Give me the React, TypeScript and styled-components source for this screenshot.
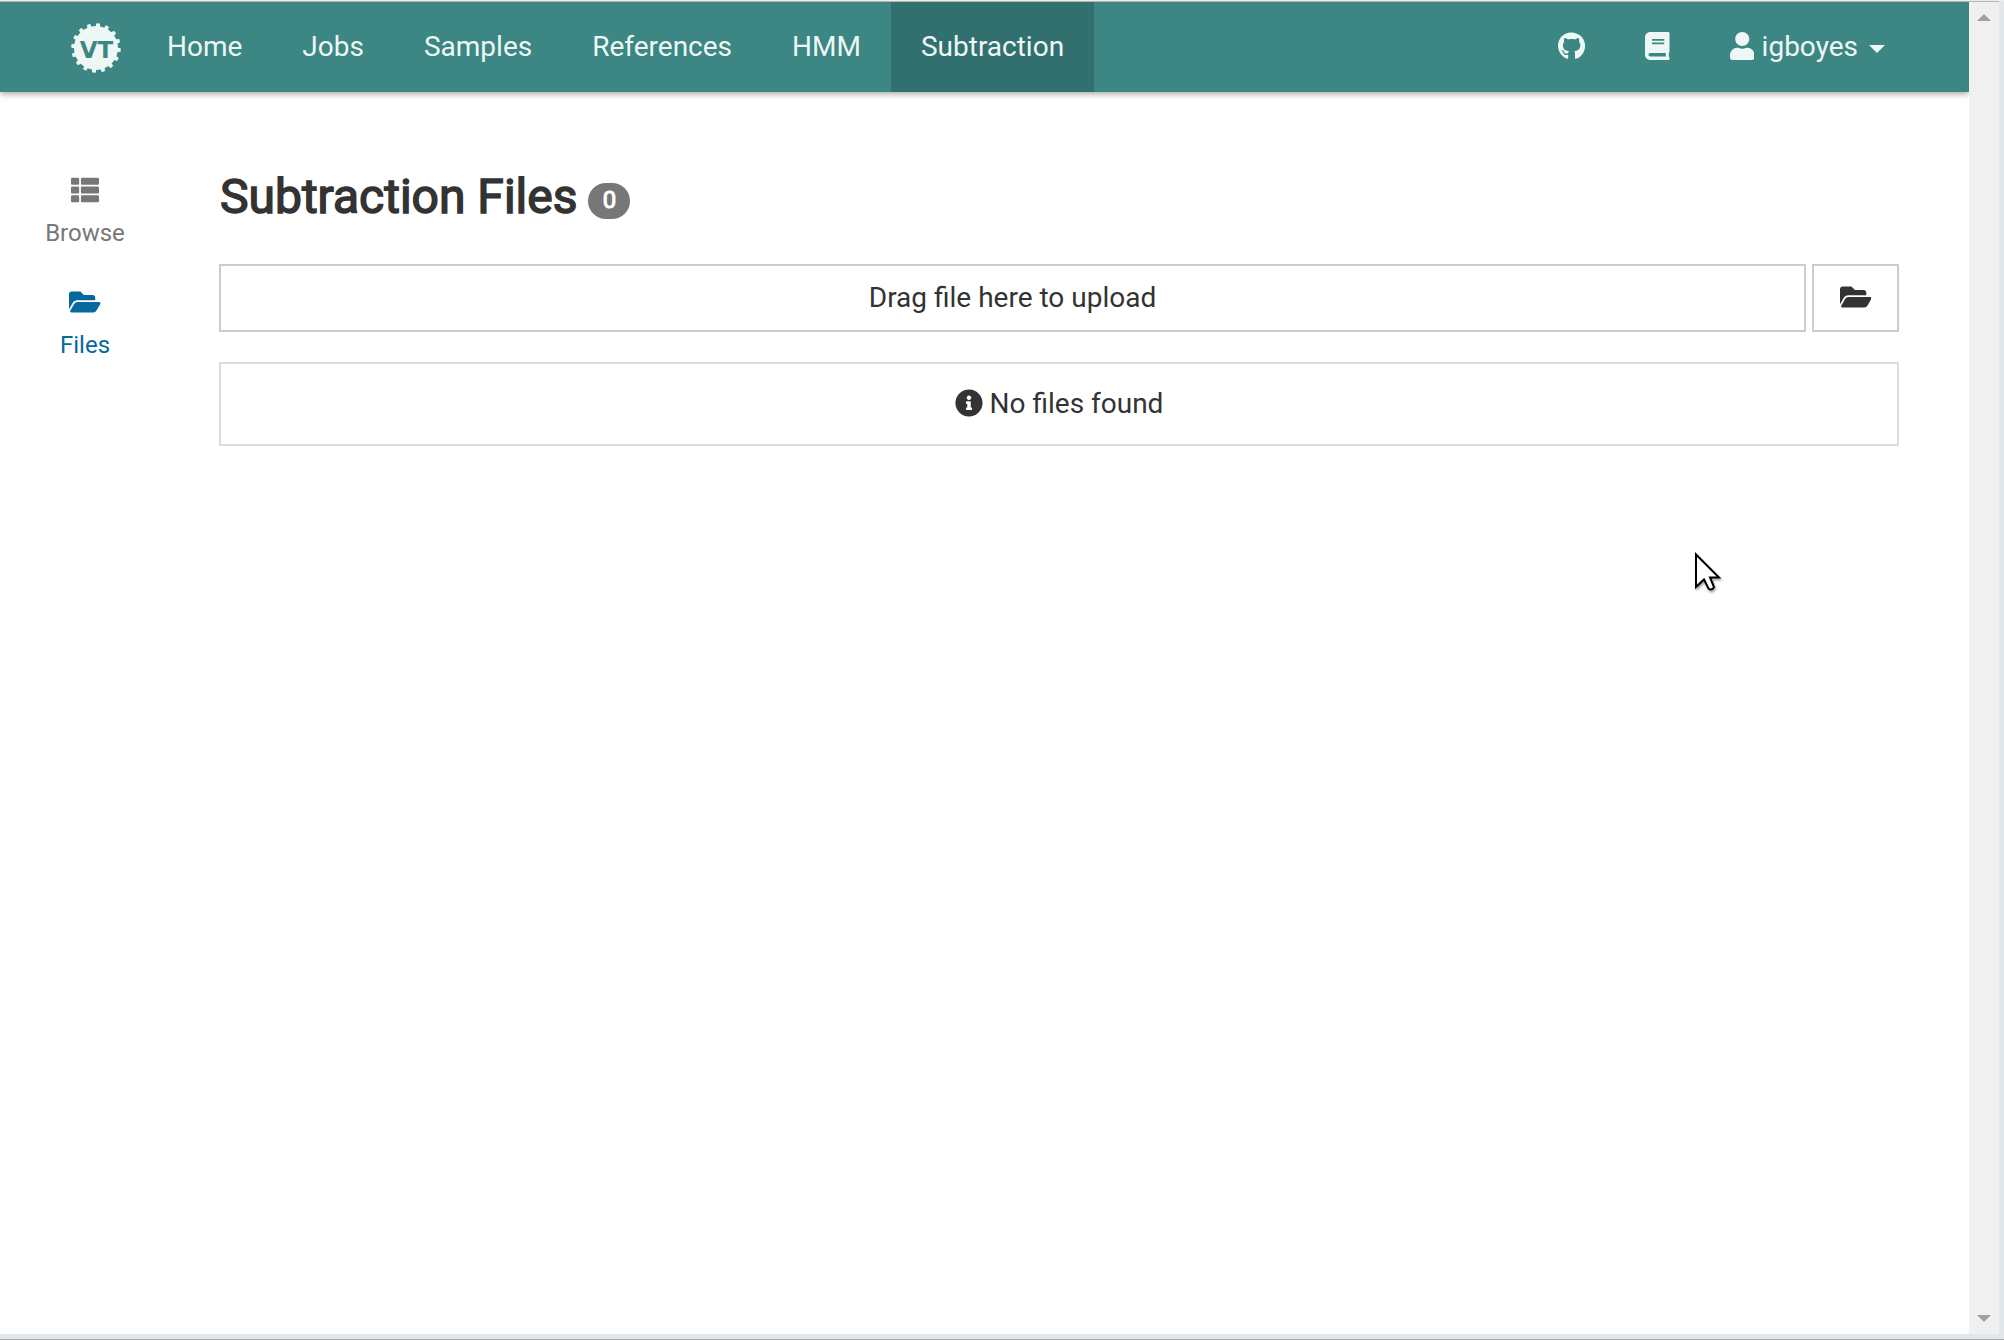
import React from "react";
import styled, { createGlobalStyle } from "styled-components";
import { FaBook, FaFolderOpen, FaGithub, FaInfoCircle, FaThList, FaUser } from "react-icons/fa";

const GlobalStyle = createGlobalStyle`
  * { box-sizing: border-box; }
  body { margin: 0; font-family: Roboto, "Liberation Sans", sans-serif; font-size: 28px; line-height: 40px; color: #333; background: #fff; }
`;

const Window = styled.div`
  position: relative;
  display: flex;
  flex-direction: column;
  width: 2004px;
  height: 1340px;
  overflow: hidden;
  background: #e2e7eb;
  border-top: 1px solid #e9edf0;
`;

const Viewport = styled.div`
  display: flex;
  width: 1999px;
  height: 1333px;
  border-top: 1px solid #b4b4b4;
`;

const Page = styled.div`
  flex: 1;
  background: #fff;
  overflow: hidden;
`;

const WindowEdge = styled.div`
  margin-top: auto;
  height: 1px;
  background: #a9adb0;
`;

const Scrollbar = styled.div`
  display: flex;
  flex-direction: column;
  justify-content: space-between;
  align-items: center;
  width: 30px;
  padding: 12px 0;
  background: #f0f0f0;
`;

const Arrow = styled.div<{ $down?: boolean }>`
  border: 7px solid transparent;
  border-top-width: ${(p) => (p.$down ? 7 : 0)}px;
  border-bottom-width: ${(p) => (p.$down ? 0 : 7)}px;
  border-${(p) => (p.$down ? "top" : "bottom")}-color: #a0a0a0;
`;

const NavBar = styled.nav`
  display: flex;
  justify-content: space-between;
  height: 90px;
  padding: 0 54px 0 70px;
  color: #edf7f6;
  background: #3c8683;
  box-shadow: 0 2px 6px rgba(0, 0, 0, 0.35);
`;

const NavGroup = styled.div`
  display: flex;
`;

const Logo = styled.svg`
  width: 52px;
  height: 52px;
  margin: 19.5px 15.5px 0 -0.5px;
`;

const NavItem = styled.a<{ $active?: boolean }>`
  display: flex;
  align-items: center;
  padding: 0 30px;
  background: ${(p) => (p.$active ? "#31706f" : "transparent")};
`;

const Icon = styled.span<{ $width?: number; $lift?: number }>`
  display: flex;
  margin-bottom: ${(p) => p.$lift ?? 0}px;
  svg {
    width: ${(p) => p.$width ?? 28}px;
    height: 28px;
  }
`;

const UserName = styled.span`
  margin: 0 11px 0 7.5px;
`;

const Caret = styled.span`
  margin-top: 4px;
  border: 8px solid transparent;
  border-top-color: currentColor;
  border-bottom-width: 0;
`;

const Body = styled.div`
  display: flex;
  padding: 80px 70px 0 0;
`;

const Sidebar = styled.aside`
  display: flex;
  flex-direction: column;
  gap: 32px;
  width: 170px;
  margin-right: 49px;
`;

const SideLink = styled.a<{ $active?: boolean }>`
  display: flex;
  flex-direction: column;
  align-items: center;
  height: 80px;
  padding-top: 4px;
  gap: 12px;
  font-size: 24px;
  line-height: 34px;
  color: ${(p) => (p.$active ? "#07689d" : "#777")};
`;

const Main = styled.main`
  flex: 1;
`;

const Heading = styled.h3`
  display: flex;
  margin: 0;
  height: 92px;
  padding-left: 1px;
  font-size: 48px;
  line-height: 50px;
  font-weight: 400;
  -webkit-text-stroke: 1.5px currentColor;
`;

const Badge = styled.span`
  width: 42px;
  height: 36px;
  margin: 11px 0 0 11px;
  border-radius: 20px;
  background: #777;
  color: #fff;
  font-size: 24px;
  line-height: 35px;
  text-align: center;
  -webkit-text-stroke: 1px currentColor;
`;

const UploadRow = styled.div`
  display: flex;
  gap: 6px;
  height: 68px;
  margin-bottom: 30px;
`;

const DropZone = styled.div`
  flex: 1;
  display: flex;
  align-items: center;
  justify-content: center;
  border: 2px solid #ccc;
`;

const BrowseButton = styled.button`
  display: flex;
  align-items: center;
  justify-content: center;
  width: 87px;
  padding: 0;
  border: 2px solid #ccc;
  background: #fff;
  color: #333;
`;

const EmptyMessage = styled.div`
  display: flex;
  align-items: center;
  justify-content: center;
  gap: 7px;
  height: 84px;
  border: 2px solid #ddd;
`;

const Pointer = styled.svg`
  position: absolute;
  left: 1690px;
  top: 544px;
  width: 36px;
  height: 50px;
  filter: drop-shadow(1px 2px 1px rgba(0, 0, 0, 0.35));
`;

const TEETH = Array.from({ length: 16 }, (_, i) => 5 + i * 22.5);
const LINKS = ["Home", "Jobs", "Samples", "References", "HMM", "Subtraction"];

function VirtoolLogo() {
  return (
    <Logo viewBox="-26 -26 52 52">
      <g fill="#edf7f6">
        <circle r="22" />
        {TEETH.map((angle) => (
          <rect key={angle} x="-2" y="-24.8" width="4" height="5" rx="1" transform={`rotate(${angle})`} />
        ))}
      </g>
      <text x="0.5" y="10.2" textAnchor="middle" fontFamily="DejaVu Sans" fontWeight="700" fontSize="23" fill="#3c8683">
        VT
      </text>
    </Logo>
  );
}

export default function App() {
  return (
    <Window>
      <GlobalStyle />
      <Viewport>
        <Page>
          <NavBar>
            <NavGroup>
              <VirtoolLogo />
              {LINKS.map((name) => (
                <NavItem key={name} $active={name === "Subtraction"}>{name}</NavItem>
              ))}
            </NavGroup>
            <NavGroup>
              <NavItem><Icon $width={27.1} $lift={3}><FaGithub /></Icon></NavItem>
              <NavItem><Icon $width={24.5} $lift={3}><FaBook /></Icon></NavItem>
              <NavItem>
                <Icon $width={24.5} $lift={3}><FaUser /></Icon>
                <UserName>igboyes</UserName>
                <Caret />
              </NavItem>
            </NavGroup>
          </NavBar>
          <Body>
            <Sidebar>
              <SideLink><Icon><FaThList /></Icon>Browse</SideLink>
              <SideLink $active><Icon $width={31.5}><FaFolderOpen /></Icon>Files</SideLink>
            </Sidebar>
            <Main>
              <Heading>Subtraction Files<Badge>0</Badge></Heading>
              <UploadRow>
                <DropZone>Drag file here to upload</DropZone>
                <BrowseButton aria-label="Browse files"><Icon $width={31.5} $lift={2}><FaFolderOpen /></Icon></BrowseButton>
              </UploadRow>
              <EmptyMessage><Icon $lift={3}><FaInfoCircle /></Icon>No files found</EmptyMessage>
            </Main>
          </Body>
        </Page>
        <Scrollbar><Arrow /><Arrow $down /></Scrollbar>
      </Viewport>
      <WindowEdge />
      <Pointer viewBox="0 0 36 50">
        <path d="M6 9.5V42L14 34.5L18.5 43.5Q20.5 45.5 23 43.5L24 42L20 32.5H29Z" fill="#fff" stroke="#000" strokeWidth="2" />
      </Pointer>
    </Window>
  );
}
